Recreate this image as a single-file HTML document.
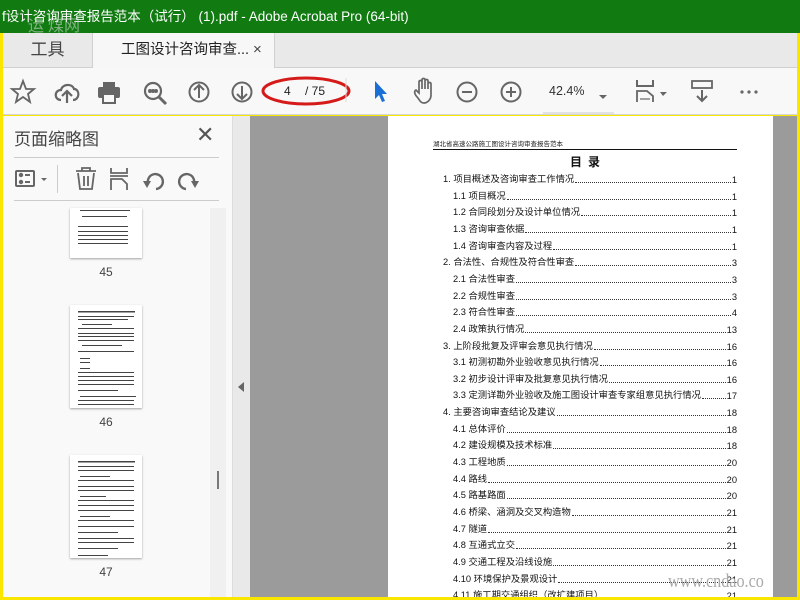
<!DOCTYPE html>
<html><head><meta charset="utf-8"><style>
*{margin:0;padding:0;box-sizing:border-box}
body{width:800px;height:600px;overflow:hidden;position:relative;background:#fbe600;font-family:"Liberation Sans","Noto Sans CJK SC",sans-serif}
.abs{position:absolute}
#title{left:0;top:0;width:800px;height:33px;background:#117b12;color:#fff;font-size:13.5px;line-height:34px;padding-left:2px;white-space:nowrap}
#tabs{left:3px;top:33px;width:794px;height:35px;background:#e9e9e9;border-bottom:1px solid #d0d0d0}
#tab1{left:0;top:0;width:89px;height:35px;font-size:17px;color:#444;text-align:center;line-height:34px}
#tab2{left:89px;top:0;width:183px;height:35px;background:#f7f7f7;border-left:1px solid #d0d0d0;border-right:1px solid #d0d0d0;font-size:14.5px;color:#222;line-height:34px;padding-left:28px}
#tb{left:3px;top:68px;width:794px;height:47px;background:#f8f8f8;border-bottom:1px solid #d5d5d5}
svg.i{position:absolute}
#left{left:3px;top:116px;width:229px;height:481px;background:#f9f9f9}
#strip{left:232px;top:116px;width:18px;height:481px;background:#e9e9e9;border-left:1px solid #ddd}
#gray{left:250px;top:116px;width:547px;height:481px;background:#9b9b9b}
#page{left:388px;top:116px;width:385px;height:481px;background:#fff;overflow:hidden}
.row{position:absolute;display:flex;font-size:9.3px;color:#111;white-space:nowrap;align-items:flex-end;height:12px}
.row .d{flex:1;border-bottom:1px dotted #333;margin:0 1px 2px}
.th{position:absolute;left:70px;width:72px;background:#fff;box-shadow:0 1px 2px rgba(0,0,0,.35)}
.tl{position:absolute;left:96px;width:20px;text-align:center;font-size:12px;color:#444}
</style></head><body>
<div class="abs" id="title">f设计咨询审查报告范本（试行） (1).pdf - Adobe Acrobat Pro (64-bit)</div>
<div class="abs" style="left:28px;top:12px;color:#c8d8c8;font-size:16px;opacity:.6;font-family:'Liberation Serif',serif">运 煤网</div>
<div class="abs" id="tabs">
 <div class="abs" id="tab1">工具</div>
 <div class="abs" id="tab2">工图设计咨询审查...<span style="position:absolute;left:160px;font-size:15px;color:#444">×</span></div>
</div>
<div class="abs" id="tb"></div>
<svg class="i" style="left:0;top:68px" width="800" height="48" fill="none" stroke="#666" stroke-width="2">
 <path d="M23 13 L26 21 L34 21 L28 26 L30 34 L23 29 L16 34 L18 26 L12 21 L20 21 Z" stroke-width="1.8"/>
 <path d="M61 32 C54 32 54 22 61 22 C62 16 72 15 74 21 C80 21 80 32 73 32" stroke-width="2.2"/>
 <path d="M67 35 V24 M62 28 L67 23 L72 28" stroke-width="2.2"/>
 <rect x="103" y="14" width="12" height="6" fill="#666" stroke="none"/>
 <rect x="98" y="19" width="22" height="11" rx="2" fill="#666" stroke="none"/>
 <rect x="103" y="26" width="12" height="9" fill="#f8f8f8" stroke="#666" stroke-width="2"/>
 <circle cx="153" cy="23" r="8" stroke-width="2.2"/><path d="M159 29 L166 36" stroke-width="3"/>
 <circle cx="150" cy="23" r="1" fill="#666"/><circle cx="153" cy="23" r="1" fill="#666"/><circle cx="156" cy="23" r="1" fill="#666"/>
 <circle cx="199" cy="24" r="9.5"/><path d="M199 30 V18 M194 22 L199 17 L204 22"/>
 <circle cx="242" cy="24" r="9.5"/><path d="M242 18 V30 M237 26 L242 31 L247 26"/>
 <ellipse cx="306" cy="23" rx="43" ry="13" stroke="#d51a1a" stroke-width="3"/>
 <path d="M346 10 V34" stroke="#ddd" stroke-width="1"/>
 <path d="M375 13 L375 31 L379 27 L382 34 L385 33 L382 26 L387 26 Z" fill="#1a6fd6" stroke="none"/>
 <path d="M418 30 C414 26 414 23 416 22 L419 25 V14 C419 12 422 12 422 14 V21 M422 21 V12 C422 10 425 10 425 12 V21 M425 21 V13 C425 11 428 11 428 13 V21 M428 21 V16 C428 14 431 14 431 16 V27 C431 32 427 35 424 35 C421 35 420 33 418 30" stroke-width="1.7"/>
 <circle cx="467" cy="24" r="9.5"/><path d="M462 24 H472"/>
 <circle cx="511" cy="24" r="9.5"/><path d="M506 24 H516 M511 19 V29"/>
 <path d="M543 45 H614" stroke="#ccc" stroke-width="1"/>
 <path d="M599 27 L607 27 L603 31 Z" fill="#666" stroke="none"/>
 <path d="M637 12 V18 H653 V12" /><path d="M637 34 V23 H647 L653 28 V34" stroke-width="1.8"/><path d="M640 31 H650" stroke-width="1.2"/>
 <path d="M660 24 L667 24 L663 28 Z" fill="#666" stroke="none"/>
 <rect x="692" y="13" width="20" height="7" stroke-width="1.8"/><path d="M702 22 V33 M697 28 L702 33 L707 28"/>
 <circle cx="742" cy="24" r="1.6" fill="#666" stroke="none"/><circle cx="749" cy="24" r="1.6" fill="#666" stroke="none"/><circle cx="756" cy="24" r="1.6" fill="#666" stroke="none"/>
</svg>
<div class="abs" style="left:284px;top:84px;font-size:12px;color:#222">4</div>
<div class="abs" style="left:305px;top:84px;font-size:12px;color:#222">/ 75</div>
<div class="abs" style="left:549px;top:84px;font-size:12.5px;color:#333">42.4%</div>
<div class="abs" id="left">
 <div class="abs" style="left:11px;top:9px;font-size:17px;color:#444">页面缩略图</div>
 <div class="abs" style="left:193px;top:6px;font-size:22px;color:#555">✕</div>
 <div class="abs" style="left:11px;top:41px;width:205px;height:1px;background:#ccc"></div>
 <div class="abs" style="left:11px;top:84px;width:205px;height:1px;background:#ccc"></div>
 <div class="abs" style="left:54px;top:49px;width:1px;height:28px;background:#ccc"></div>
</div>
<svg class="i" style="left:0;top:116px" width="232" height="90" fill="none" stroke="#666" stroke-width="2">
 <rect x="16" y="55" width="18" height="15" rx="1"/><circle cx="21" cy="59" r="1.2" fill="#666"/><circle cx="21" cy="66" r="1.2" fill="#666"/><path d="M25 59 H30 M25 66 H30"/>
 <path d="M41 62 L47 62 L44 65 Z" fill="#666" stroke="none"/>
 <path d="M76 55 H96 M82 55 V52 H90 V55 M78 57 L80 73 H92 L94 57 M84 60 V70 M88 60 V70" stroke-width="1.8"/>
 <path d="M111 52 V57 H127 V52 M110 60 H128 M111 74 V63 H122 L127 68 V74" stroke-width="1.8"/>
 <path d="M148 67 A7.5 7.5 0 1 1 156 73" stroke-width="2.4"/><path d="M143 65 L151 65 L147 72 Z" fill="#666" stroke="none"/>
 <path d="M194 67 A7.5 7.5 0 1 0 186 73" stroke-width="2.4"/><path d="M199 65 L191 65 L195 72 Z" fill="#666" stroke="none"/>
</svg>
<div class="abs" style="left:210px;top:208px;width:16px;height:389px;background:#f0f0f0"></div>
<div class="abs" style="left:217px;top:471px;width:2px;height:18px;background:#777"></div>
<div class="th" style="top:208px;height:50px"></div>
<div class="tl" style="top:265px">45</div>
<div class="th" style="top:305px;height:103px"></div>
<div class="tl" style="top:415px">46</div>
<div class="th" style="top:455px;height:103px"></div>
<div class="tl" style="top:565px">47</div>
<svg class="i" style="left:0;top:200px" width="232" height="400">
<g fill="#444">
 <rect x="80" y="10" width="50" height="1"/><rect x="82" y="16" width="45" height="1"/><rect x="78" y="26" width="50" height="1"/><rect x="78" y="31" width="50" height="1"/><rect x="78" y="35" width="50" height="1"/><rect x="78" y="39" width="50" height="1"/><rect x="78" y="43" width="50" height="1"/>
 <rect x="78" y="111" width="57" height="1.5"/><rect x="78" y="116" width="56" height="1"/><rect x="78" y="119" width="50" height="1"/><rect x="82" y="124" width="30" height="1"/><rect x="78" y="128" width="56" height="1"/><rect x="78" y="133" width="56" height="1"/><rect x="78" y="136" width="56" height="1"/><rect x="78" y="140" width="56" height="1"/><rect x="82" y="145" width="40" height="1"/><rect x="78" y="151" width="56" height="1"/><rect x="80" y="158" width="10" height="1"/><rect x="80" y="162" width="10" height="1"/><rect x="80" y="168" width="10" height="1"/><rect x="78" y="172" width="56" height="1"/><rect x="78" y="176" width="56" height="1"/><rect x="78" y="180" width="56" height="1"/><rect x="78" y="184" width="56" height="1"/><rect x="78" y="190" width="40" height="1"/><rect x="80" y="196" width="56" height="1"/><rect x="78" y="200" width="56" height="1"/><rect x="78" y="204" width="56" height="1"/>
 <rect x="78" y="261" width="57" height="1.5"/><rect x="78" y="266" width="56" height="1"/><rect x="78" y="270" width="56" height="1"/><rect x="80" y="276" width="30" height="1"/><rect x="78" y="280" width="56" height="1"/><rect x="78" y="286" width="56" height="1"/><rect x="78" y="290" width="56" height="1"/><rect x="80" y="296" width="26" height="1"/><rect x="78" y="300" width="56" height="1"/><rect x="78" y="305" width="56" height="1"/><rect x="78" y="310" width="56" height="1"/><rect x="80" y="316" width="30" height="1"/><rect x="78" y="320" width="56" height="1"/><rect x="78" y="326" width="56" height="1"/><rect x="78" y="332" width="40" height="1"/><rect x="78" y="338" width="56" height="1"/><rect x="78" y="342" width="56" height="1"/><rect x="78" y="348" width="40" height="1"/><rect x="78" y="355" width="30" height="1"/>
</g></svg>
<div class="abs" id="strip"></div>
<svg class="i" style="left:236px;top:381px" width="10" height="12"><path d="M8 1 V11 L2 6 Z" fill="#666"/></svg>
<div class="abs" id="gray"></div>
<div class="abs" id="page">
 <div class="abs" style="left:45px;top:22px;font-size:6.5px;color:#222">湖北省高速公路施工图设计咨询审查报告范本</div>
 <div class="abs" style="left:45px;top:33px;width:304px;height:1px;background:#111"></div>
 <div class="abs" style="left:182px;top:37px;font-size:12px;font-weight:bold;color:#111;letter-spacing:6px">目录</div>
 <div id="toc"></div>
</div>
<div class="abs" style="left:668px;top:571px;font-size:19px;color:#aaa;font-family:'Liberation Serif',serif;transform:scaleX(0.85);transform-origin:left">www.cndao.co</div>
<script>
var r=[[0,"1. 项目概述及咨询审查工作情况","1"],[1,"1.1 项目概况","1"],[1,"1.2 合同段划分及设计单位情况","1"],[1,"1.3 咨询审查依据","1"],[1,"1.4 咨询审查内容及过程","1"],[0,"2. 合法性、合规性及符合性审查","3"],[1,"2.1 合法性审查","3"],[1,"2.2 合规性审查","3"],[1,"2.3 符合性审查","4"],[1,"2.4 政策执行情况","13"],[0,"3. 上阶段批复及评审会意见执行情况","16"],[1,"3.1 初测初勘外业验收意见执行情况","16"],[1,"3.2 初步设计评审及批复意见执行情况","16"],[1,"3.3 定测详勘外业验收及施工图设计审查专家组意见执行情况","17"],[0,"4. 主要咨询审查结论及建议","18"],[1,"4.1 总体评价","18"],[1,"4.2 建设规模及技术标准","18"],[1,"4.3 工程地质","20"],[1,"4.4 路线","20"],[1,"4.5 路基路面","20"],[1,"4.6 桥梁、涵洞及交叉构造物","21"],[1,"4.7 隧道","21"],[1,"4.8 互通式立交","21"],[1,"4.9 交通工程及沿线设施","21"],[1,"4.10 环境保护及景观设计","21"],[1,"4.11 施工期交通组织（改扩建项目）","21"]];
var h="";r.forEach(function(e,i){var y=57+i*16.65;var l=e[0]?65:55;h+='<div class="row" style="top:'+y+'px;left:'+l+'px;width:'+(349-l)+'px"><span>'+e[1]+'</span><span class="d"></span><span>'+e[2]+'</span></div>'});
document.getElementById("toc").innerHTML=h;
</script>
</body></html>
